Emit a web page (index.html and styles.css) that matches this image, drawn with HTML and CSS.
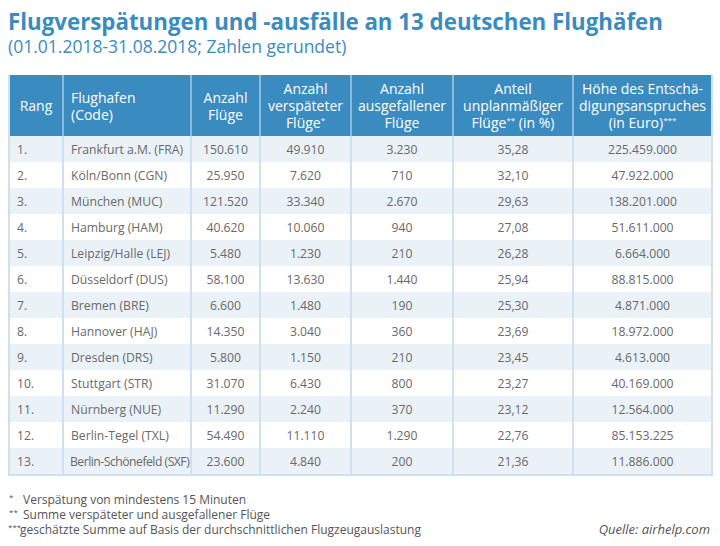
FILE: index.html
```html
<!DOCTYPE html>
<html lang="de">
<head>
<meta charset="utf-8">
<link rel="stylesheet" href="styles.css">
</head>
<body>
<div class="page">
  <h1 class="title">Flugverspätungen und -ausfälle an 13 deutschen Flughäfen</h1>
  <p class="subtitle">(01.01.2018-31.08.2018; Zahlen gerundet)</p>
  <table class="data">
    <colgroup>
      <col class="c1"><col class="c2"><col class="c3"><col class="c4"><col class="c5"><col class="c6"><col class="c7">
    </colgroup>
    <thead>
      <tr>
        <th>Rang</th>
        <th class="left">Flughafen<br>(Code)</th>
        <th>Anzahl<br>Flüge</th>
        <th>Anzahl<br>verspäteter<br>Flüge<span class="sup">*</span></th>
        <th>Anzahl<br>ausgefallener<br>Flüge</th>
        <th>Anteil<br>unplanmäßiger<br>Flüge<span class="sup">**</span> (in %)</th>
        <th>Höhe des Entschä-<br>digungsanspruches<br>(in Euro)<span class="sup">***</span></th>
      </tr>
    </thead>
    <tbody>
      <tr><td class="left">1.</td><td class="left">Frankfurt a.M. (FRA)</td><td>150.610</td><td>49.910</td><td>3.230</td><td>35,28</td><td>225.459.000</td></tr>
      <tr><td class="left">2.</td><td class="left">Köln/Bonn (CGN)</td><td>25.950</td><td>7.620</td><td>710</td><td>32,10</td><td>47.922.000</td></tr>
      <tr><td class="left">3.</td><td class="left">München (MUC)</td><td>121.520</td><td>33.340</td><td>2.670</td><td>29,63</td><td>138.201.000</td></tr>
      <tr><td class="left">4.</td><td class="left">Hamburg (HAM)</td><td>40.620</td><td>10.060</td><td>940</td><td>27,08</td><td>51.611.000</td></tr>
      <tr><td class="left">5.</td><td class="left">Leipzig/Halle (LEJ)</td><td>5.480</td><td>1.230</td><td>210</td><td>26,28</td><td>6.664.000</td></tr>
      <tr><td class="left">6.</td><td class="left">Düsseldorf (DUS)</td><td>58.100</td><td>13.630</td><td>1.440</td><td>25,94</td><td>88.815.000</td></tr>
      <tr><td class="left">7.</td><td class="left">Bremen (BRE)</td><td>6.600</td><td>1.480</td><td>190</td><td>25,30</td><td>4.871.000</td></tr>
      <tr><td class="left">8.</td><td class="left">Hannover (HAJ)</td><td>14.350</td><td>3.040</td><td>360</td><td>23,69</td><td>18.972.000</td></tr>
      <tr><td class="left">9.</td><td class="left">Dresden (DRS)</td><td>5.800</td><td>1.150</td><td>210</td><td>23,45</td><td>4.613.000</td></tr>
      <tr><td class="left">10.</td><td class="left">Stuttgart (STR)</td><td>31.070</td><td>6.430</td><td>800</td><td>23,27</td><td>40.169.000</td></tr>
      <tr><td class="left">11.</td><td class="left">Nürnberg (NUE)</td><td>11.290</td><td>2.240</td><td>370</td><td>23,12</td><td>12.564.000</td></tr>
      <tr><td class="left">12.</td><td class="left">Berlin-Tegel (TXL)</td><td>54.490</td><td>11.110</td><td>1.290</td><td>22,76</td><td>85.153.225</td></tr>
      <tr><td class="left">13.</td><td class="left condensed">Berlin-Schönefeld (SXF)</td><td>23.600</td><td>4.840</td><td>200</td><td>21,36</td><td>11.886.000</td></tr>
    </tbody>
  </table>
  <div class="footer">
    <ul class="notes">
      <li><span class="mark">*</span>Verspätung von mindestens 15 Minuten</li>
      <li><span class="mark">**</span>Summe verspäteter und ausgefallener Flüge</li>
      <li><span class="mark tight">***</span>geschätzte Summe auf Basis der durchschnittlichen Flugzeugauslastung</li>
    </ul>
    <div class="source">Quelle: airhelp.com</div>
  </div>
</div>
</body>
</html>
```
FILE: styles.css
```css
html, body {
  margin: 0;
  padding: 0;
  background: #ffffff;
}
.page {
  width: 720px;
  height: 546px;
  padding: 8px 9px 0 8px;
  box-sizing: border-box;
  font-family: "Open Sans", "DejaVu Sans", sans-serif;
}
.title {
  margin: 0;
  font-size: 22.3px;
  line-height: 27px;
  font-weight: 700;
  color: #3a8cc0;
}
.subtitle {
  margin: 0;
  font-size: 17.5px;
  line-height: 22px;
  font-weight: 400;
  color: #3a8cc0;
}
.data {
  margin-top: 18px;
  width: 703px;
  border-collapse: collapse;
  table-layout: fixed;
  border: 2px solid #cde1ef;
  border-top: none;
}
.c1 { width: 54px; }
.c2 { width: 128px; }
.c3 { width: 69px; }
.c4 { width: 91px; }
.c5 { width: 102px; }
.c6 { width: 120px; }
.c7 { width: 139px; }
.data th {
  background: #3a8bbf;
  color: #ffffff;
  font-weight: 400;
  font-size: 14px;
  line-height: 17px;
  height: 61px;
  padding: 0 4px;
  text-align: center;
  border-left: 2px solid #8cbcdc;
  box-sizing: border-box;
}
.data th:first-child { border-left: none; }
.data th.left { text-align: left; padding-left: 7px; }
.data .sup {
  font-size: 8px;
  line-height: 1;
  vertical-align: 5px;
}
.data td {
  height: 26px;
  padding: 0 4px;
  font-size: 12.2px;
  color: #696969;
  text-align: center;
  border-left: 2px solid #cde1ef;
  white-space: nowrap;
}
.data td:first-child { border-left: none; }
.data td.left { text-align: left; padding-left: 7px; }
.data tbody tr:nth-child(odd) td { background: #eaf2f8; }
.data td.condensed { letter-spacing: -0.5px; padding-left: 6px; }
.footer {
  margin-top: 16px;
  display: flex;
  justify-content: space-between;
  align-items: flex-end;
  font-size: 12px;
  line-height: 15px;
  color: #555555;
}
.notes {
  list-style: none;
  margin: 0;
  padding: 0;
}
.notes li { display: flex; }
.mark {
  display: inline-block;
  width: 14px;
  font-size: 8px;
  line-height: 10px;
  padding-left: 1px;
}
.mark.tight { width: 12px; padding-left: 0; }
.source {
  font-style: italic;
  font-size: 13px;
  padding-right: 1px;
}
```
